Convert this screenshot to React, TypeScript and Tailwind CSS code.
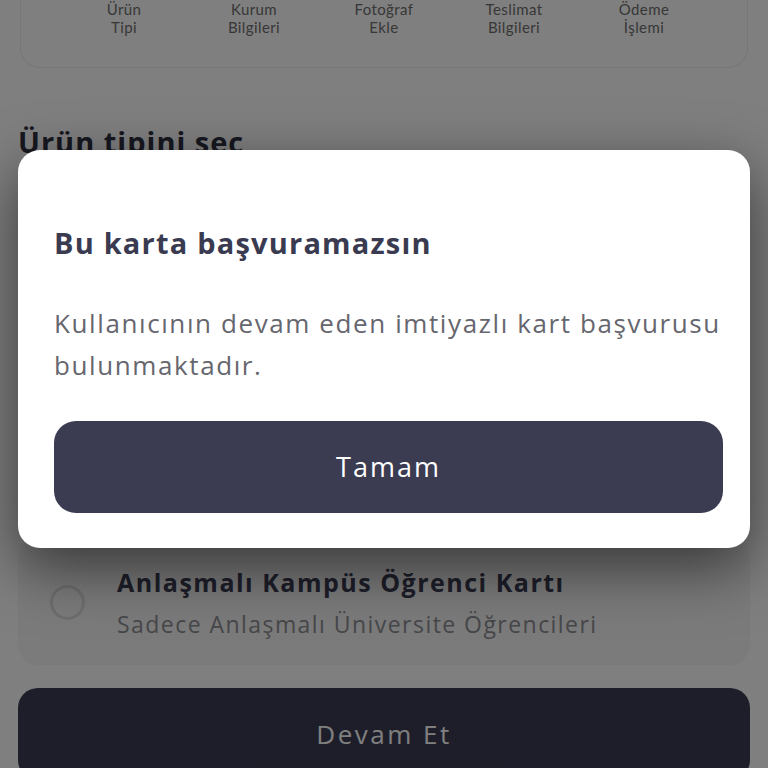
import { useState } from "react";

const steps = [
  ["Ürün", "Tipi"],
  ["Kurum", "Bilgileri"],
  ["Fotoğraf", "Ekle"],
  ["Teslimat", "Bilgileri"],
  ["Ödeme", "İşlemi"],
];

export default function App() {
  const [open, setOpen] = useState<boolean>(true);

  return (
    <div
      className="relative h-[768px] w-[768px] overflow-hidden bg-white"
      style={{ fontFamily: '"Open Sans", "Noto Sans", sans-serif' }}
    >
      {/* page under the dialog */}
      <div className="-mt-[62px] flex flex-col px-[18px]">
        <div className="mx-[2px] rounded-[20px] border border-[#ececec] bg-white pb-[31px] pt-[20px]">
          <div className="grid h-[40px] grid-cols-5 px-[38px]">
            {steps.map((s, i) => (
              <div key={i} className="flex justify-center">
                <div className="h-[32px] w-[32px] rounded-full bg-[#ececec]" />
              </div>
            ))}
          </div>
          <div className="mt-[1px] grid grid-cols-5 px-[38px]">
            {steps.map((s) => (
              <p
                key={s[0]}
                className="text-center text-[15px] leading-[18px] tracking-[0.4px] text-[#6f6f6f]"
                style={{ fontFamily: "Lato, sans-serif" }}
              >
                {s[0]}
                <br />
                {s[1]}
              </p>
            ))}
          </div>
        </div>

        <h2 className="mt-[56px] text-[29px] font-bold leading-[36px] tracking-[1px] text-[#2e2f40]">Ürün tipini seç</h2>

        <div className="mt-[379px] flex items-center gap-[32px] rounded-[20px] bg-[#f7f7f7] px-[32px] py-[27px]">
          <div className="h-[35px] w-[35px] shrink-0 rounded-full border-[3px] border-[#dcdcdc] bg-[#f7f7f7]" />
          <div className="flex flex-col">
            <div className="text-[25px] font-bold leading-[32px] tracking-[1.5px] text-[#3b3c52]">
              Anlaşmalı Kampüs Öğrenci Kartı
            </div>
            <div className="mt-[12px] text-[23px] leading-[28px] tracking-[1.45px] text-[#8e8e94]">
              Sadece Anlaşmalı Üniversite Öğrencileri
            </div>
          </div>
        </div>

        <button className="mt-[23px] flex h-[92px] items-center justify-center rounded-[20px] bg-[#3b3c52] text-[26px] font-medium tracking-[2.5px] text-white">
          Devam Et
        </button>
      </div>

      {open && (
        <div className="absolute inset-0 bg-black/50">
          <div className="absolute left-[18px] right-[18px] top-[150px] rounded-[22px] bg-white pb-[35px] pl-[36px] pr-[27px] pt-[76px] shadow-[0_20px_60px_rgba(0,0,0,0.55)]">
            <h3 className="text-[29px] font-bold leading-[34px] tracking-[1.2px] text-[#3a3b50]">Bu karta başvuramazsın</h3>
            <p className="mt-[42px] text-[26px] leading-[42px] tracking-[1.6px] text-[#66666e]">
              Kullanıcının devam eden imtiyazlı kart başvurusu bulunmaktadır.
            </p>
            <button
              onClick={() => setOpen(false)}
              className="mt-[35px] flex h-[92px] w-full items-center justify-center rounded-[22px] bg-[#3b3c52] text-[27px] font-medium tracking-[2px] text-white"
            >
              Tamam
            </button>
          </div>
        </div>
      )}
    </div>
  );
}
